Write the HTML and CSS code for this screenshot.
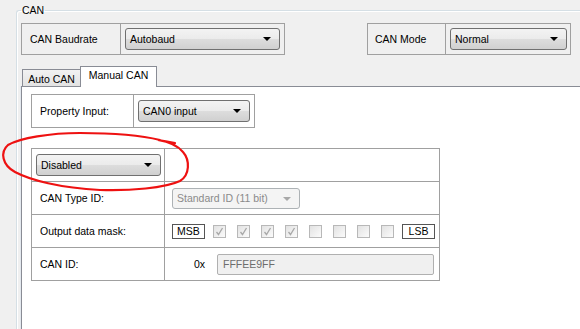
FILE: index.html
```html
<!DOCTYPE html>
<html>
    <head>
        <link rel="stylesheet" href="styles.css">
    </head>
    <body>
        <fieldset class="group">
            <legend>CAN</legend>

            <div class="top-row">
                <table class="frame baud">
                    <tr>
                        <td class="lbl">CAN Baudrate</td>
                        <td class="ctl"><div class="combo w-baud">Autobaud</div></td>
                    </tr>
                </table>
                <table class="frame mode">
                    <tr>
                        <td class="lbl">CAN Mode</td>
                        <td class="ctl"><div class="combo w-mode">Normal</div></td>
                    </tr>
                </table>
            </div>

            <div class="tabs">
                <div class="tab tab-auto">Auto CAN</div>
                <div class="tab tab-manual active">Manual CAN</div>
            </div>

            <div class="panel">
                <table class="frame prop">
                    <tr>
                        <td class="lbl">Property Input:</td>
                        <td class="ctl"><div class="combo w-prop">CAN0 input</div></td>
                    </tr>
                </table>

                <table class="frame grid">
                    <tr>
                        <td class="first"><div class="combo w-state">Disabled</div></td>
                        <td></td>
                    </tr>
                    <tr>
                        <td class="lbl">CAN Type ID:</td>
                        <td class="val"><div class="combo disabled w-type">Standard ID (11 bit)</div></td>
                    </tr>
                    <tr>
                        <td class="lbl">Output data mask:</td>
                        <td class="val">
                            <div class="mask">
                                <span class="tag">MSB</span>
                                <span class="chk"><svg width="11" height="11" viewBox="0 0 11 11"><path d="M2.5 6 L4.5 8.5 L8.5 2" fill="none" stroke="#a8a8a8" stroke-width="1.3"/></svg></span>
                                <span class="chk"><svg width="11" height="11" viewBox="0 0 11 11"><path d="M2.5 6 L4.5 8.5 L8.5 2" fill="none" stroke="#a8a8a8" stroke-width="1.3"/></svg></span>
                                <span class="chk"><svg width="11" height="11" viewBox="0 0 11 11"><path d="M2.5 6 L4.5 8.5 L8.5 2" fill="none" stroke="#a8a8a8" stroke-width="1.3"/></svg></span>
                                <span class="chk"><svg width="11" height="11" viewBox="0 0 11 11"><path d="M2.5 6 L4.5 8.5 L8.5 2" fill="none" stroke="#a8a8a8" stroke-width="1.3"/></svg></span>
                                <span class="chk"></span>
                                <span class="chk"></span>
                                <span class="chk"></span>
                                <span class="chk"></span>
                                <span class="tag">LSB</span>
                            </div>
                        </td>
                    </tr>
                    <tr>
                        <td class="lbl">CAN ID:</td>
                        <td class="val id-cell">
                            <span class="hex">0x</span>
                            <div class="textbox">FFFEE9FF</div>
                        </td>
                    </tr>
                </table>
            </div>
        </fieldset>

        <!-- red hand-drawn marker -->
        <svg class="marker" width="580" height="329" viewBox="0 0 580 329">
            <path d="M160 140 C140 135 110 133 80 133 C50 133 20 138 8 145 C0 152 2 165 15 172 C30 180 60 188 100 190 C130 191 165 188 180 181 C190 175 190 160 183 152 C178 146 170 142 158 140 C165 141 170 142 175 143" fill="none" stroke="#ee1111" stroke-width="2.2" stroke-linecap="round"/>
        </svg>
    </body>
</html>
```

FILE: styles.css
```css
body {
    margin: 0;
    width: 580px;
    height: 329px;
    overflow: hidden;
    position: relative;
    background: #f0f0f0;
    font-family: "Liberation Sans", Arial, sans-serif;
    font-size: 10.5px;
    color: #000;
}

.group {
    margin: 4px 0 0 16px;
    padding: 7px 0 0 4px;
    width: 564px;
    height: 325px;
    box-sizing: border-box;
    min-width: 0;
    border: 1px solid #d5dfe5;
    border-right: none;
    border-bottom: none;
    border-radius: 3px 0 0 0;
    box-shadow: inset 1px 1px 0 #fff;
}

.group legend {
    padding: 0 1px;
    line-height: 12px;
}

.top-row {
    display: flex;
    justify-content: space-between;
    width: 550px;
}

.frame {
    border-collapse: collapse;
}

.frame td {
    border: 1px solid #a0a0a0;
    padding: 0;
}

.frame .lbl {
    padding-left: 8px;
    white-space: nowrap;
}

.frame .ctl { padding-left: 4px; }

.baud tr, .mode tr { height: 31px; }
.baud .lbl { width: 90px; }
.baud .ctl { width: 159px; }

.mode .lbl { width: 70px; padding-left: 7px; }
.mode .ctl { width: 120px; }

.prop tr { height: 33px; }
.prop .lbl { width: 93px; }
.prop .ctl { width: 116px; }

/* combo boxes */
.combo {
    position: relative;
    box-sizing: border-box;
    height: 22px;
    line-height: 20px;
    padding-left: 4px;
    border: 1px solid #707070;
    border-radius: 3px;
    background: linear-gradient(#f3f3f3 0%, #ebebeb 50%, #dddddd 51%, #d0d0d0 100%);
    white-space: nowrap;
}

.combo::after {
    content: "";
    position: absolute;
    right: 8px;
    top: 8px;
    border-left: 4px solid transparent;
    border-right: 4px solid transparent;
    border-top: 4px solid #000;
}

.combo.disabled {
    height: 21px;
    line-height: 19px;
    border-color: #adb2b5;
    background: #f4f4f4;
    color: #8a8a8a;
}

.combo.disabled::after {
    border-top-color: #a8a8a8;
}

.w-baud { width: 155px; }
.w-mode { width: 117px; }
.w-prop { width: 112px; }
.w-state { width: 125px; }
.w-type { width: 128px; }

/* tabs */
.tabs {
    display: flex;
    align-items: flex-end;
    margin: 11px 0 0 1px;
    height: 20px;
}

.tab {
    box-sizing: border-box;
    border: 1px solid #898c95;
    border-bottom: none;
    text-align: center;
    white-space: nowrap;
}

.tab-auto {
    width: 59px;
    height: 17px;
    line-height: 18px;
    background: linear-gradient(#f2f2f2, #e3e3e3);
}

.tab-manual {
    width: 77px;
    height: 21px;
    line-height: 17px;
    margin-left: -1px;
    margin-bottom: -1px;
}

.tab.active {
    position: relative;
    z-index: 1;
    background: #fff;
}

.panel {
    height: 242px;
    padding: 7px 0 0 9px;
    border-left: 1px solid #898c95;
    border-top: 1px solid #898c95;
    background: #fff;
    box-shadow: -1px 0 0 #e3e8ee;
}

/* main grid */
.grid {
    width: 409px;
    margin-top: 20px;
}

.grid tr { height: 33px; }

.grid .first {
    width: 128px;
    padding-left: 4px;
}

.grid .val { padding-left: 7px; }

.mask {
    display: flex;
    align-items: center;
}

.tag {
    box-sizing: border-box;
    width: 33px;
    height: 15px;
    line-height: 13px;
    text-align: center;
    border: 1px solid #555;
    background: #fff;
}

.chk {
    box-sizing: border-box;
    width: 13px;
    height: 13px;
    border: 1px solid #b8b8b8;
    background: linear-gradient(135deg, #e2e2e2, #fbfbfb);
}

.chk svg {
    display: block;
}

.chk + .chk { margin-left: 11px; }
.tag + .chk, .chk + .tag { margin-left: 8px; }

.grid .id-cell {
    text-align: right;
    padding-right: 5px;
}

.hex,
.textbox {
    display: inline-block;
    vertical-align: middle;
}

.hex { margin-right: 9px; }

.textbox {
    box-sizing: border-box;
    width: 217px;
    height: 21px;
    line-height: 19px;
    padding-left: 5px;
    text-align: left;
    border: 1px solid #b0b0b0;
    border-radius: 2px;
    background: #f0f0f0;
    color: #6d6d6d;
}

.marker {
    position: absolute;
    left: 0;
    top: 0;
    pointer-events: none;
}
```
